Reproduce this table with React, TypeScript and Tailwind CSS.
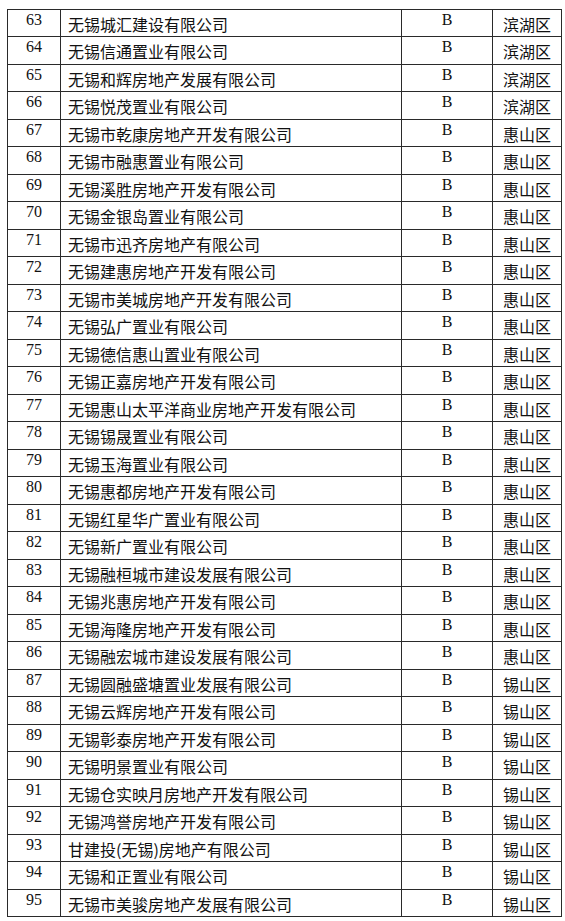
import React from "react";

const rows: [number, string, string][] = [
  [63, "无锡城汇建设有限公司", "滨湖区"],
  [64, "无锡信通置业有限公司", "滨湖区"],
  [65, "无锡和辉房地产发展有限公司", "滨湖区"],
  [66, "无锡悦茂置业有限公司", "滨湖区"],
  [67, "无锡市乾康房地产开发有限公司", "惠山区"],
  [68, "无锡市融惠置业有限公司", "惠山区"],
  [69, "无锡溪胜房地产开发有限公司", "惠山区"],
  [70, "无锡金银岛置业有限公司", "惠山区"],
  [71, "无锡市迅齐房地产有限公司", "惠山区"],
  [72, "无锡建惠房地产开发有限公司", "惠山区"],
  [73, "无锡市美城房地产开发有限公司", "惠山区"],
  [74, "无锡弘广置业有限公司", "惠山区"],
  [75, "无锡德信惠山置业有限公司", "惠山区"],
  [76, "无锡正嘉房地产开发有限公司", "惠山区"],
  [77, "无锡惠山太平洋商业房地产开发有限公司", "惠山区"],
  [78, "无锡锡晟置业有限公司", "惠山区"],
  [79, "无锡玉海置业有限公司", "惠山区"],
  [80, "无锡惠都房地产开发有限公司", "惠山区"],
  [81, "无锡红星华广置业有限公司", "惠山区"],
  [82, "无锡新广置业有限公司", "惠山区"],
  [83, "无锡融桓城市建设发展有限公司", "惠山区"],
  [84, "无锡兆惠房地产开发有限公司", "惠山区"],
  [85, "无锡海隆房地产开发有限公司", "惠山区"],
  [86, "无锡融宏城市建设发展有限公司", "惠山区"],
  [87, "无锡圆融盛塘置业发展有限公司", "锡山区"],
  [88, "无锡云辉房地产开发有限公司", "锡山区"],
  [89, "无锡彰泰房地产开发有限公司", "锡山区"],
  [90, "无锡明景置业有限公司", "锡山区"],
  [91, "无锡仓实映月房地产开发有限公司", "锡山区"],
  [92, "无锡鸿誉房地产开发有限公司", "锡山区"],
  [93, "甘建投(无锡)房地产有限公司", "锡山区"],
  [94, "无锡和正置业有限公司", "锡山区"],
  [95, "无锡市美骏房地产发展有限公司", "锡山区"],
];

const serif = "font-['Liberation_Serif','Times_New_Roman',serif]";
const cjk = "font-['Noto_Sans_CJK_SC','Noto_Sans',sans-serif]";

export default function App() {
  return (
    <div className="w-[565px] h-[921px] bg-white overflow-hidden pt-[9px] pl-[7px]">
      <table className="border-collapse table-fixed w-[554px] text-[#111]">
        <colgroup>
          <col className="w-[53px]" />
          <col className="w-[341px]" />
          <col className="w-[91px]" />
          <col className="w-[69px]" />
        </colgroup>
        <tbody>
          {rows.map(([n, name, area], i) => (
            <tr key={n} className={i % 2 === 0 ? "h-[27px]" : "h-[28px]"}>
              <td className={`border border-[#2a2a2a] align-top text-center ${serif} text-[16px] leading-none pt-[2px] p-0`}>
                {n}
              </td>
              <td className={`border border-[#2a2a2a] align-top text-left ${cjk} text-[16px] leading-none pt-[6px] pl-[7px] pr-0 pb-0 whitespace-nowrap`}>
                {name}
              </td>
              <td className={`border border-[#2a2a2a] align-top text-center ${serif} text-[16px] leading-none pt-[2px] p-0`}>
                B
              </td>
              <td className={`border border-[#2a2a2a] align-top text-center ${cjk} text-[16px] leading-none pt-[6px] p-0 whitespace-nowrap`}>
                {area}
              </td>
            </tr>
          ))}
        </tbody>
      </table>
    </div>
  );
}
